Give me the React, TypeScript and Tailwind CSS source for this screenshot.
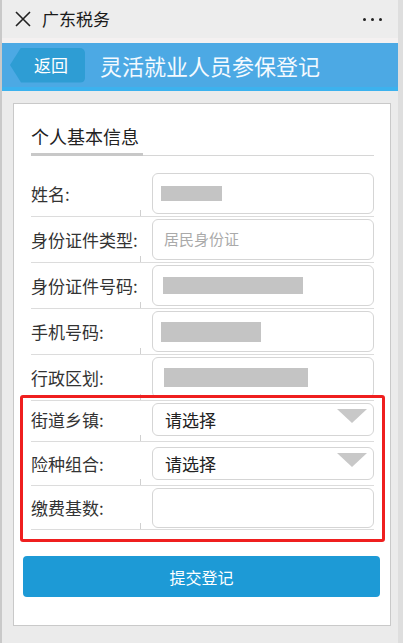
import React from 'react';

const FONT = "font-['Noto_Sans_CJK_SC','Noto_Sans',sans-serif]";

type RowProps = {
  label: string;
  rowH: string;
  boxH: string;
  children?: React.ReactNode;
};

// one label + input line with the divider underneath
const FieldRow: React.FC<RowProps> = ({ label, rowH, boxH, children }) => (
  <div className={`relative flex items-center border-b border-[#dcdcdc] ${rowH}`}>
    <div className="w-[121px] text-[17px] leading-none text-[#333]">{label}</div>
    <div
      className={`relative flex flex-1 items-center rounded-[6px] border border-[#d5d5d5] bg-white pl-[8px] ${boxH}`}
    >
      {children}
    </div>
    <span className="absolute bottom-0 left-[109px] h-[6px] w-px bg-[#d0d0d0]" />
  </div>
);

const Bar: React.FC<{ cls: string }> = ({ cls }) => <div className={`bg-[#c4c4c4] ${cls}`} />;

const Arrow = () => (
  <span className="absolute right-[6px] top-[5px] h-0 w-0 border-l-[15px] border-r-[15px] border-t-[14px] border-l-transparent border-r-transparent border-t-[#c8c8c8]" />
);

export default function App() {
  return (
    <div className={`h-[643px] w-full border-l-2 border-r-[5px] border-l-[#c9c9c9] border-r-[#dedede] bg-[#ebebeb] ${FONT}`}>
      {/* wechat top bar */}
      <div className="flex h-[38px] items-center bg-[#ededed] pl-[13px] pr-[16px]">
        <svg width="16" height="16" viewBox="0 0 16 16" className="shrink-0">
          <path d="M1 1L15 15M15 1L1 15" stroke="#222" strokeWidth="1.6" fill="none" />
        </svg>
        <span className="ml-[11px] text-[17px] text-[#1a1a1a]">广东税务</span>
        <div className="ml-auto flex gap-[5px]">
          <span className="h-[3px] w-[3px] rounded-full bg-[#222]" />
          <span className="h-[3px] w-[3px] rounded-full bg-[#222]" />
          <span className="h-[3px] w-[3px] rounded-full bg-[#222]" />
        </div>
      </div>
      <div className="h-[5px] bg-[#f4f1f1]" />

      {/* blue title band */}
      <div className="flex h-[48px] items-center border-b-[4px] border-[#3cb2ee] bg-[#4ca9e4] pl-[8px]">
        <div className="flex h-[35px] w-[75px] items-center rounded-r-[5px] bg-[#2e9dd4] pl-[24px] text-[17px] text-white [clip-path:polygon(11px_0,100%_0,100%_100%,11px_100%,0_50%)]">
          返回
        </div>
        <div className="ml-[15px] text-[22px] text-[#f4faff]">灵活就业人员参保登记</div>
      </div>

      {/* form card */}
      <div className="ml-[11px] mr-[7px] mt-[12px] border border-[#c9c9c9] bg-white pb-[28px] pl-[17px] pr-[16px] pt-[19px]">
        <div className="text-[18px] leading-[26px] text-[#222]">个人基本信息</div>
        <div className="mt-[4px] flex items-end">
          <span className="h-[3px] w-[112px] bg-[#c8c8c8]" />
          <span className="h-px flex-1 bg-[#d6d6d6]" />
        </div>

        <div className="mt-[15px]">
          <FieldRow label="姓名:" rowH="h-[46px]" boxH="h-[41px]">
            <Bar cls="h-[15px] w-[61px]" />
          </FieldRow>
          <FieldRow label="身份证件类型:" rowH="h-[46px]" boxH="h-[41px]">
            <span className="pl-[3px] text-[15px] text-[#aaa]">居民身份证</span>
          </FieldRow>
          <FieldRow label="身份证件号码:" rowH="h-[46px]" boxH="h-[41px]">
            <Bar cls="ml-[2px] h-[17px] w-[140px]" />
          </FieldRow>
          <FieldRow label="手机号码:" rowH="h-[46px]" boxH="h-[41px]">
            <Bar cls="h-[20px] w-[100px]" />
          </FieldRow>
          <FieldRow label="行政区划:" rowH="h-[46px]" boxH="h-[41px]">
            <Bar cls="ml-[3px] h-[19px] w-[144px]" />
          </FieldRow>
        </div>

        {/* highlighted block */}
        <div className="relative -mx-[11px] -mt-[6px] rounded-[3px] border-[3px] border-[#ef1f1f] pb-[9px] pl-[8px] pr-[8px]">
          <FieldRow label="街道乡镇:" rowH="h-[44px]" boxH="h-[33px]">
            <span className="pl-[4px] text-[17px] text-[#222]">请选择</span>
            <Arrow />
          </FieldRow>
          <FieldRow label="险种组合:" rowH="h-[44px]" boxH="h-[33px]">
            <span className="pl-[4px] text-[17px] text-[#222]">请选择</span>
            <Arrow />
          </FieldRow>
          <FieldRow label="缴费基数:" rowH="h-[44px]" boxH="h-[40px]" />
        </div>

        <div className="-ml-[8px] -mr-[6px] mt-[14px] flex h-[41px] items-center justify-center rounded-[4px] bg-[#1d9ad6] text-[16px] text-white">
          提交登记
        </div>
      </div>
    </div>
  );
}
